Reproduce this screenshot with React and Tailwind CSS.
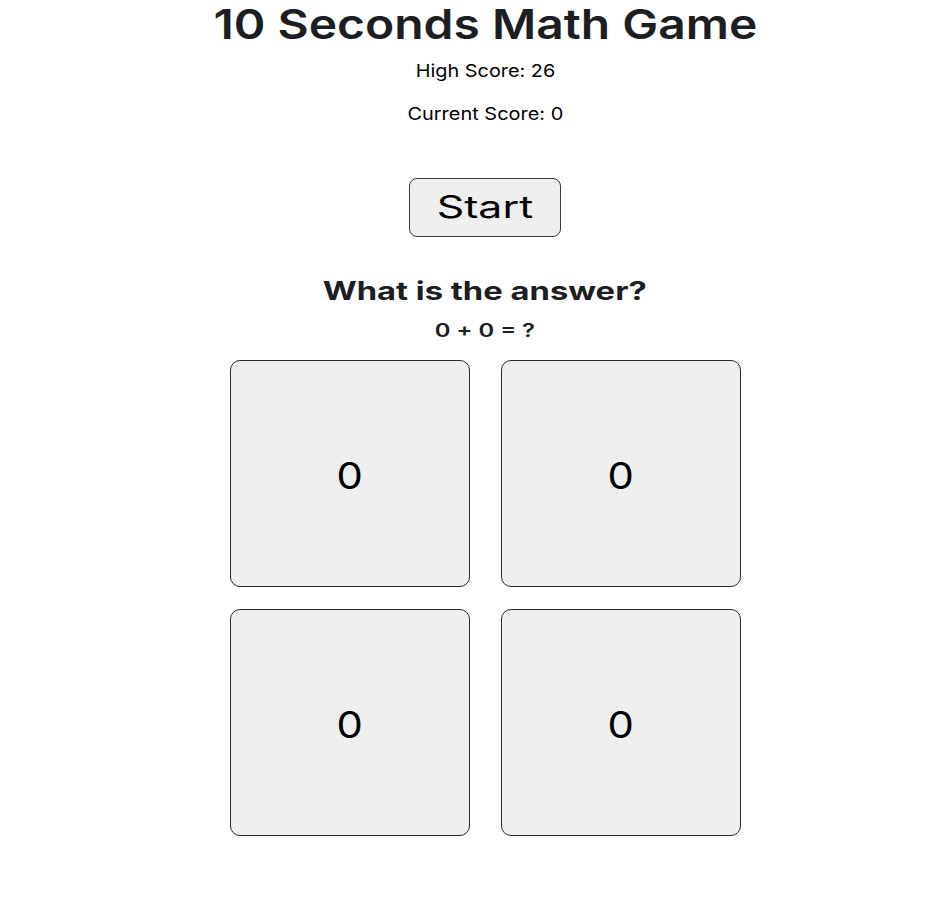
export default function App() {
  const answers = [0, 0, 0, 0];
  return (
    <div className="min-h-[903px] w-full bg-white pl-[37px] text-[#1c1e21]" style={{ fontFamily: "Inter, 'Noto Sans', sans-serif" }}>
      <div className="flex flex-col items-center">
        <h1 className="text-[41px] leading-[48px] font-semibold">
          <span className="inline-block scale-x-[1.17]">10 Seconds Math Game</span>
        </h1>
        <p className="mt-[12px] text-[17.5px] leading-[22px] text-black">
          <span className="inline-block scale-x-[1.135]">High Score: 26</span>
        </p>
        <p className="mt-[21px] text-[17.5px] leading-[22px] text-black">
          <span className="inline-block scale-x-[1.14]">Current Score: 0</span>
        </p>
        <button className="mt-[53px] flex h-[59px] w-[152px] items-center justify-center rounded-[8px] border border-[#3a3a3a] bg-[#efefef] pb-[3px] text-[31px] leading-none text-black">
          <span className="inline-block scale-x-[1.38]">Start</span>
        </button>
        <h2 className="mt-[39px] text-[25px] leading-[30px] font-bold">
          <span className="inline-block scale-x-[1.31]">What is the answer?</span>
        </h2>
        <p className="mt-[14px] text-[18px] leading-[22px] font-semibold">
          <span className="inline-block scale-x-[1.32]">0 + 0 = ?</span>
        </p>
        <div className="mt-[18px] grid grid-cols-[240px_240px] gap-x-[31px] gap-y-[22px]">
          {answers.map((a, i) => (
            <div key={i} className="flex h-[227px] items-center justify-center rounded-[10px] border border-[#2a2a2a] bg-[#efefef] pt-[3px] text-[37px] leading-none text-black">
              <span className="inline-block scale-x-[1.13]">{a}</span>
            </div>
          ))}
        </div>
      </div>
    </div>
  );
}
